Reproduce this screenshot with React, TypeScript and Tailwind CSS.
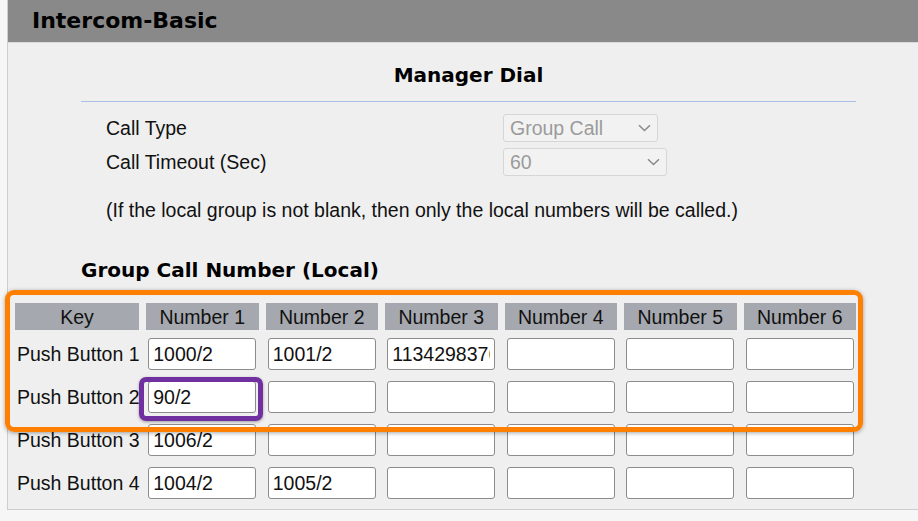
const rows = [
  { key: 'Push Button 1', values: ['1000/2', '1001/2', '11342983760', '', '', ''] },
  { key: 'Push Button 2', values: ['90/2', '', '', '', '', ''] },
  { key: 'Push Button 3', values: ['1006/2', '', '', '', '', ''] },
  { key: 'Push Button 4', values: ['1004/2', '1005/2', '', '', '', ''] },
]

const heads = ['Number 1', 'Number 2', 'Number 3', 'Number 4', 'Number 5', 'Number 6']

function Select({ value, width }: { value: string; width: string }) {
  return (
    <div className={`${width} h-[28px] flex items-center justify-between pl-[6px] pr-[6px] border border-[#d6d6d6] rounded-[3px] bg-[#f2f2f2] text-[#9b9b9b]`}>
      <span>{value}</span>
      <svg width="13" height="8" viewBox="0 0 13 8" fill="none">
        <polyline points="1,1.2 6.5,6.5 12,1.2" stroke="#8a8a8a" strokeWidth="1.5" />
      </svg>
    </div>
  )
}

export default function App() {
  return (
    <div className="relative w-[918px] h-[521px] overflow-hidden bg-[#f6f6f6] pl-[7px] font-['Liberation_Sans',Arial,sans-serif] text-[19.5px] leading-[26px] text-[#111]">
      {/* Panel */}
      <div className="h-[510px] border-l border-b border-[#cdcdcd] bg-[#efefef] flex flex-col">
        <div className="h-[43px] shrink-0 bg-[#898989] border-b border-[#dadada] flex items-center pl-[24px]">
          <span className="font-['DejaVu_Sans',sans-serif] font-bold text-[22px] text-black">Intercom-Basic</span>
        </div>

        {/* Manager Dial */}
        <div className="ml-[73px] w-[775px]">
          <div className="mt-[16px] h-[32px] leading-[32px] text-center font-['DejaVu_Sans',sans-serif] font-bold text-[20px] text-black">Manager Dial</div>
          <div className="mt-[10px] h-px bg-[#a9c0e2]" />
          <div className="mt-[12px] ml-[25px] flex flex-col gap-[6px]">
            <div className="flex items-center">
              <span className="w-[397px]">Call Type</span>
              <Select value="Group Call" width="w-[155px]" />
            </div>
            <div className="flex items-center">
              <span className="w-[397px]">Call Timeout (Sec)</span>
              <Select value="60" width="w-[164px]" />
            </div>
          </div>
          <div className="mt-[22px] ml-[25px] leading-[24px]">(If the local group is not blank, then only the local numbers will be called.)</div>
        </div>

        <div className="ml-[73px] mt-[34px] h-[28px] leading-[28px] font-['DejaVu_Sans',sans-serif] font-bold text-[20px] text-black">Group Call Number (Local)</div>

        {/* Table */}
        <div className="ml-[7px] mt-[19px] w-[841px]">
          <div className="grid grid-cols-[124px_repeat(6,1fr)] gap-x-[7px]">
            <div className="h-[27px] bg-[#a5a8ae] flex items-center justify-center">Key</div>
            {heads.map(h => (
              <div key={h} className="h-[27px] bg-[#a5a8ae] flex items-center justify-center">{h}</div>
            ))}
          </div>
          <div className="mt-[8px] flex flex-col gap-[11px]">
            {rows.map(r => (
              <div key={r.key} className="grid grid-cols-[124px_repeat(6,1fr)] gap-x-[7px] items-center">
                <div className="pl-[2px] whitespace-nowrap">{r.key}</div>
                {r.values.map((v, i) => (
                  <div key={i} className="flex justify-center">
                    <input
                      readOnly
                      value={v}
                      className="w-[108px] h-[32px] px-[4px] bg-white border border-[#8c8c8c] rounded-[3px] outline-none font-['Liberation_Sans',Arial,sans-serif] text-[19.5px] text-[#111]"
                    />
                  </div>
                ))}
              </div>
            ))}
          </div>
        </div>
      </div>

      {/* Annotation overlays */}
      <div className="absolute left-[5px] top-[290px] w-[858px] h-[142px] border-[5px] border-[#ff8000] rounded-[9px] shadow-[0_1px_4px_rgba(0,0,0,0.35)] pointer-events-none" />
      <div className="absolute left-[139px] top-[377px] w-[124px] h-[44px] border-[5px] border-[#7030a0] rounded-[7px] shadow-[0_1px_3px_rgba(0,0,0,0.35)] pointer-events-none" />
    </div>
  )
}
